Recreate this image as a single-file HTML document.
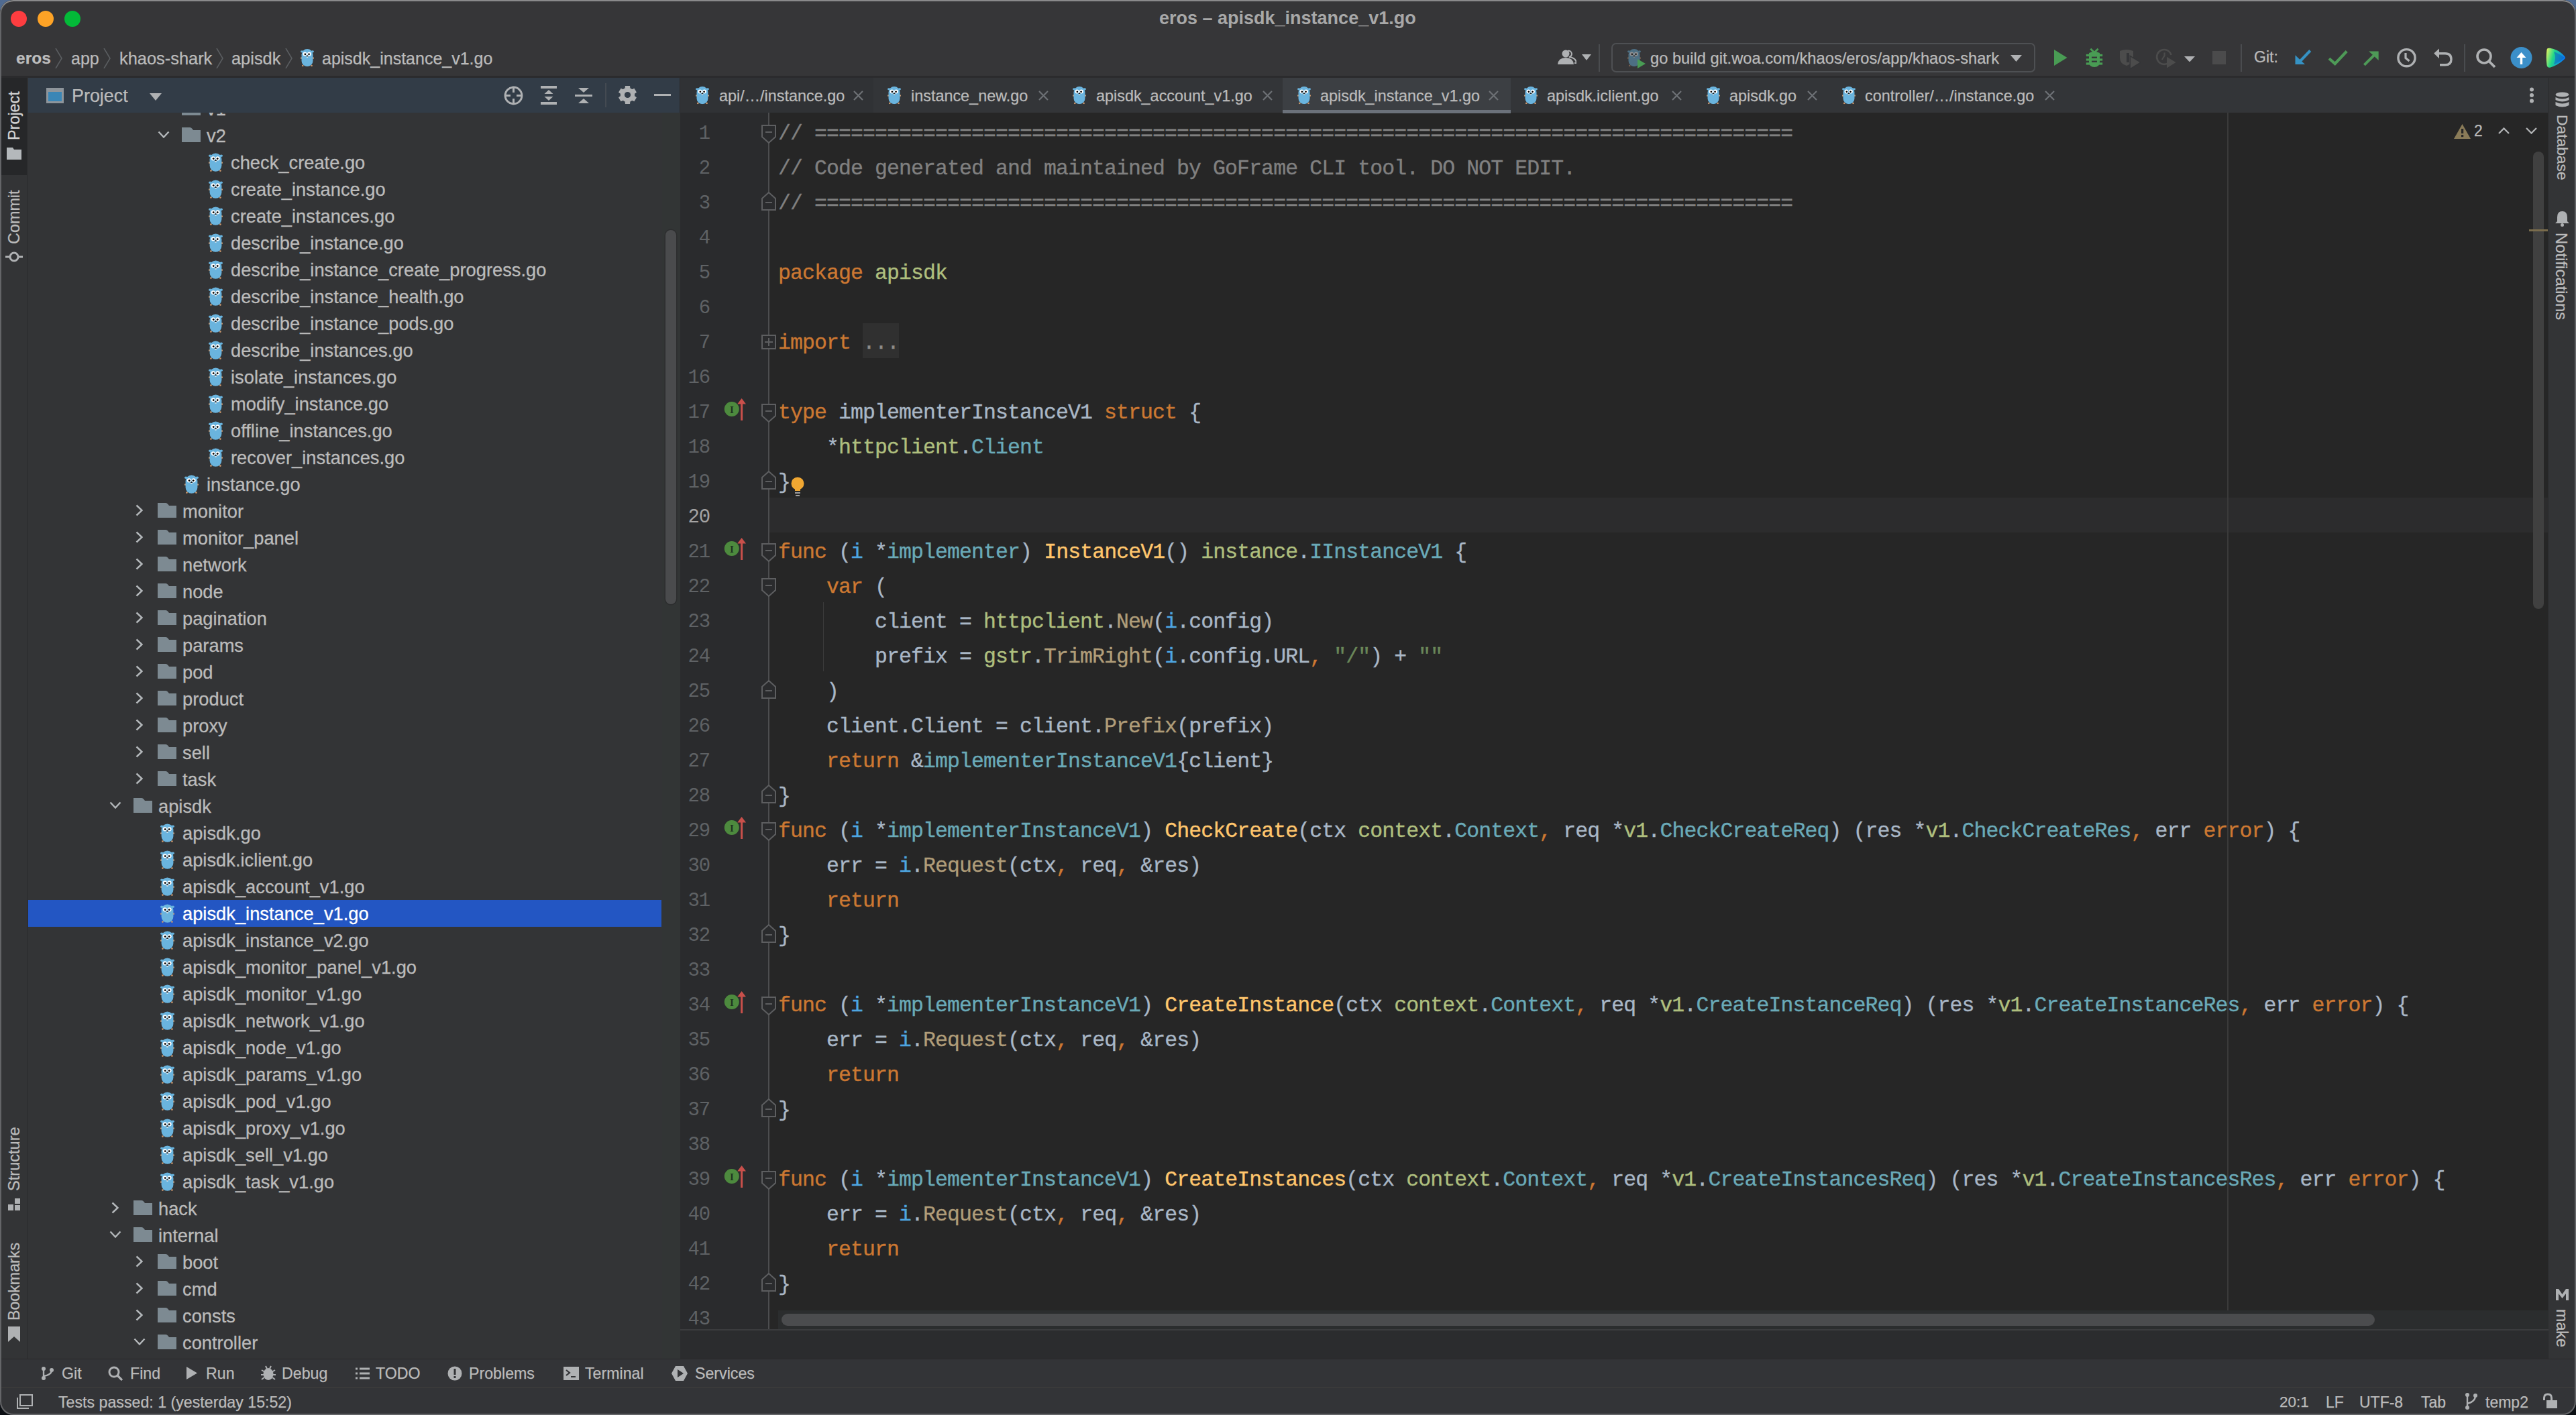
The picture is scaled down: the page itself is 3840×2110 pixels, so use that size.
<!DOCTYPE html><html><head><meta charset="utf-8"><style>
*{box-sizing:border-box}html,body{margin:0;padding:0;width:3840px;height:2110px;overflow:hidden;background:linear-gradient(180deg,#506b92 0%,#2a3444 50%,#0b0f14 100%)}
.abs{position:absolute}
#win{position:absolute;left:0;top:0;width:3840px;height:2110px;border-radius:20px;overflow:hidden;background:#363638;box-shadow:inset 0 0 0 2px #5a5b5e}
.sans{font-family:'Liberation Sans', sans-serif}
.mono{font-family:'Liberation Mono', monospace}
.tr{position:absolute;height:40px;line-height:40px;font-family:'Liberation Sans', sans-serif;font-size:27.3px;color:#bbbbbb;white-space:pre;-webkit-text-stroke:0.3px currentColor}
.cl{position:absolute;left:1160px;height:52px;line-height:52px;font-family:'Liberation Mono', monospace;font-size:31.5px;letter-spacing:-0.9px;-webkit-text-stroke:0.35px currentColor;color:#a9b7c6;white-space:pre}
.ln{position:absolute;left:1000px;width:58px;text-align:right;height:52px;line-height:52px;font-family:'Liberation Mono', monospace;font-size:29px;letter-spacing:-1.2px;color:#5f6265;white-space:pre}
.kw{color:#cc7832}.cm{color:#808080}.pk{color:#afbf7e}.ty{color:#6aaab8}.fn{color:#ffc66d}.call{color:#b09d79}.rc{color:#4ea6e0}.st{color:#6a8759}
.tab{position:absolute;top:115px;height:53px;line-height:53px;font-family:'Liberation Sans', sans-serif;font-size:26px;color:#bbbbbb;white-space:pre}
.vt{position:absolute;font-family:'Liberation Sans', sans-serif;font-size:24px;color:#bbbbbb;white-space:pre;transform-origin:0 0;transform:rotate(-90deg)}
.bt{position:absolute;top:2026px;height:43px;line-height:43px;font-family:'Liberation Sans', sans-serif;font-size:25px;color:#bbbbbb;white-space:pre}
.st2{position:absolute;top:2069px;height:41px;line-height:41px;font-family:'Liberation Sans', sans-serif;font-size:24px;color:#bbbbbb;white-space:pre}

</style></head><body><div id="win">
<svg width="0" height="0" style="position:absolute"><defs>
<symbol id="gopher" viewBox="0 0 21 28">
 <ellipse cx="2.2" cy="4.3" rx="2.2" ry="1.7" fill="#6ab4de"/><ellipse cx="18.8" cy="4.3" rx="2.2" ry="1.7" fill="#6ab4de"/>
 <circle cx="1.2" cy="14.6" r="1.3" fill="#c9966c"/><circle cx="19.8" cy="14.6" r="1.3" fill="#c9966c"/>
 <circle cx="3.4" cy="26.6" r="1.4" fill="#c9966c"/><circle cx="17.4" cy="26.6" r="1.4" fill="#c9966c"/>
 <rect x="1.6" y="0.4" width="17.8" height="27.4" rx="8.9" fill="#6ab4de"/>
 <circle cx="6.8" cy="8.3" r="3.1" fill="#fff"/><circle cx="13.6" cy="8.3" r="3.1" fill="#fff"/>
 <circle cx="7.2" cy="8.6" r="1.4" fill="#000"/><circle cx="13.2" cy="8.6" r="1.4" fill="#000"/>
 <rect x="9.4" y="11.6" width="2.2" height="2" fill="#fff"/><ellipse cx="10.5" cy="11.3" rx="1.4" ry="1" fill="#222"/>
</symbol>
<symbol id="folder" viewBox="0 0 28 22">
 <path d="M0 0 H12 Q14 0 15.5 2 L17 4 H28 V22 H0 Z" fill="#7d8a92"/>
</symbol>
<symbol id="chevr" viewBox="0 0 11 18"><path d="M1.5 1.5 L9.5 9 L1.5 16.5" fill="none" stroke="#b4b8bb" stroke-width="2.4"/></symbol>
<symbol id="chevd" viewBox="0 0 18 11"><path d="M1.5 1.5 L9 9.5 L16.5 1.5" fill="none" stroke="#b4b8bb" stroke-width="2.4"/></symbol>
</defs></svg>
<div class="abs" style="left:0px;top:0px;width:3840px;height:115px;background:#363638;"></div>
<div class="abs" style="left:16px;top:16px;width:24px;height:24px;border-radius:50%;background:#fd3d40"></div>
<div class="abs" style="left:56px;top:16px;width:24px;height:24px;border-radius:50%;background:#fea326"></div>
<div class="abs" style="left:96px;top:16px;width:24px;height:24px;border-radius:50%;background:#03ba38"></div>
<div class="abs sans" style="left:1728px;top:9px;font-size:27px;font-weight:bold;color:#a8a8a8;line-height:36px;white-space:pre">eros – apisdk_instance_v1.go</div>
<div class="abs" style="left:0px;top:113px;width:3840px;height:3px;background:#2b2b2d;"></div>
<div class="abs" style="left:0px;top:115px;width:41px;height:1911px;background:#333436;"></div>
<div class="abs" style="left:41px;top:115px;width:1px;height:1911px;background:#29292b;"></div>
<div class="abs" style="left:2px;top:116px;width:38px;height:145px;background:#262729;"></div>
<div class="abs" style="left:42px;top:116px;width:972px;height:52px;background:#323c47;"></div>
<div class="abs" style="left:1013px;top:116px;width:2px;height:52px;background:#2b2b2d;"></div>
<div class="abs" style="left:42px;top:168px;width:972px;height:1858px;background:#333436;"></div>
<div class="abs" style="left:1014px;top:115px;width:2785px;height:53px;background:#333538;"></div>
<div class="abs" style="left:1014px;top:168px;width:2785px;height:1815px;background:#262626;"></div>
<div class="abs" style="left:1014px;top:168px;width:132px;height:1815px;background:#2a2b2d;"></div>
<div class="abs" style="left:42px;top:168px;width:972px;height:1858px;overflow:hidden">
<svg class="abs" style="left:229px;top:-18px" width="28" height="22"><use href="#folder"/></svg>
<svg class="abs" style="left:193px;top:-13px" width="18" height="11"><use href="#chevd"/></svg>
<div class="tr" style="left:266px;top:-25px;">v1</div>
<svg class="abs" style="left:229px;top:22px" width="28" height="22"><use href="#folder"/></svg>
<svg class="abs" style="left:193px;top:27px" width="18" height="11"><use href="#chevd"/></svg>
<div class="tr" style="left:266px;top:15px;">v2</div>
<svg class="abs" style="left:269px;top:60px" width="21" height="28"><use href="#gopher"/></svg>
<div class="tr" style="left:302px;top:55px;">check_create.go</div>
<svg class="abs" style="left:269px;top:100px" width="21" height="28"><use href="#gopher"/></svg>
<div class="tr" style="left:302px;top:95px;">create_instance.go</div>
<svg class="abs" style="left:269px;top:140px" width="21" height="28"><use href="#gopher"/></svg>
<div class="tr" style="left:302px;top:135px;">create_instances.go</div>
<svg class="abs" style="left:269px;top:180px" width="21" height="28"><use href="#gopher"/></svg>
<div class="tr" style="left:302px;top:175px;">describe_instance.go</div>
<svg class="abs" style="left:269px;top:220px" width="21" height="28"><use href="#gopher"/></svg>
<div class="tr" style="left:302px;top:215px;">describe_instance_create_progress.go</div>
<svg class="abs" style="left:269px;top:260px" width="21" height="28"><use href="#gopher"/></svg>
<div class="tr" style="left:302px;top:255px;">describe_instance_health.go</div>
<svg class="abs" style="left:269px;top:300px" width="21" height="28"><use href="#gopher"/></svg>
<div class="tr" style="left:302px;top:295px;">describe_instance_pods.go</div>
<svg class="abs" style="left:269px;top:340px" width="21" height="28"><use href="#gopher"/></svg>
<div class="tr" style="left:302px;top:335px;">describe_instances.go</div>
<svg class="abs" style="left:269px;top:380px" width="21" height="28"><use href="#gopher"/></svg>
<div class="tr" style="left:302px;top:375px;">isolate_instances.go</div>
<svg class="abs" style="left:269px;top:420px" width="21" height="28"><use href="#gopher"/></svg>
<div class="tr" style="left:302px;top:415px;">modify_instance.go</div>
<svg class="abs" style="left:269px;top:460px" width="21" height="28"><use href="#gopher"/></svg>
<div class="tr" style="left:302px;top:455px;">offline_instances.go</div>
<svg class="abs" style="left:269px;top:500px" width="21" height="28"><use href="#gopher"/></svg>
<div class="tr" style="left:302px;top:495px;">recover_instances.go</div>
<svg class="abs" style="left:233px;top:540px" width="21" height="28"><use href="#gopher"/></svg>
<div class="tr" style="left:266px;top:535px;">instance.go</div>
<svg class="abs" style="left:193px;top:582px" width="28" height="22"><use href="#folder"/></svg>
<svg class="abs" style="left:160px;top:584px" width="11" height="18"><use href="#chevr"/></svg>
<div class="tr" style="left:230px;top:575px;">monitor</div>
<svg class="abs" style="left:193px;top:622px" width="28" height="22"><use href="#folder"/></svg>
<svg class="abs" style="left:160px;top:624px" width="11" height="18"><use href="#chevr"/></svg>
<div class="tr" style="left:230px;top:615px;">monitor_panel</div>
<svg class="abs" style="left:193px;top:662px" width="28" height="22"><use href="#folder"/></svg>
<svg class="abs" style="left:160px;top:664px" width="11" height="18"><use href="#chevr"/></svg>
<div class="tr" style="left:230px;top:655px;">network</div>
<svg class="abs" style="left:193px;top:702px" width="28" height="22"><use href="#folder"/></svg>
<svg class="abs" style="left:160px;top:704px" width="11" height="18"><use href="#chevr"/></svg>
<div class="tr" style="left:230px;top:695px;">node</div>
<svg class="abs" style="left:193px;top:742px" width="28" height="22"><use href="#folder"/></svg>
<svg class="abs" style="left:160px;top:744px" width="11" height="18"><use href="#chevr"/></svg>
<div class="tr" style="left:230px;top:735px;">pagination</div>
<svg class="abs" style="left:193px;top:782px" width="28" height="22"><use href="#folder"/></svg>
<svg class="abs" style="left:160px;top:784px" width="11" height="18"><use href="#chevr"/></svg>
<div class="tr" style="left:230px;top:775px;">params</div>
<svg class="abs" style="left:193px;top:822px" width="28" height="22"><use href="#folder"/></svg>
<svg class="abs" style="left:160px;top:824px" width="11" height="18"><use href="#chevr"/></svg>
<div class="tr" style="left:230px;top:815px;">pod</div>
<svg class="abs" style="left:193px;top:862px" width="28" height="22"><use href="#folder"/></svg>
<svg class="abs" style="left:160px;top:864px" width="11" height="18"><use href="#chevr"/></svg>
<div class="tr" style="left:230px;top:855px;">product</div>
<svg class="abs" style="left:193px;top:902px" width="28" height="22"><use href="#folder"/></svg>
<svg class="abs" style="left:160px;top:904px" width="11" height="18"><use href="#chevr"/></svg>
<div class="tr" style="left:230px;top:895px;">proxy</div>
<svg class="abs" style="left:193px;top:942px" width="28" height="22"><use href="#folder"/></svg>
<svg class="abs" style="left:160px;top:944px" width="11" height="18"><use href="#chevr"/></svg>
<div class="tr" style="left:230px;top:935px;">sell</div>
<svg class="abs" style="left:193px;top:982px" width="28" height="22"><use href="#folder"/></svg>
<svg class="abs" style="left:160px;top:984px" width="11" height="18"><use href="#chevr"/></svg>
<div class="tr" style="left:230px;top:975px;">task</div>
<svg class="abs" style="left:157px;top:1022px" width="28" height="22"><use href="#folder"/></svg>
<svg class="abs" style="left:121px;top:1027px" width="18" height="11"><use href="#chevd"/></svg>
<div class="tr" style="left:194px;top:1015px;">apisdk</div>
<svg class="abs" style="left:197px;top:1060px" width="21" height="28"><use href="#gopher"/></svg>
<div class="tr" style="left:230px;top:1055px;">apisdk.go</div>
<svg class="abs" style="left:197px;top:1100px" width="21" height="28"><use href="#gopher"/></svg>
<div class="tr" style="left:230px;top:1095px;">apisdk.iclient.go</div>
<svg class="abs" style="left:197px;top:1140px" width="21" height="28"><use href="#gopher"/></svg>
<div class="tr" style="left:230px;top:1135px;">apisdk_account_v1.go</div>
<div class="abs" style="left:0px;top:1174px;width:944px;height:40px;background:#2356c3;"></div>
<svg class="abs" style="left:197px;top:1180px" width="21" height="28"><use href="#gopher"/></svg>
<div class="tr" style="left:230px;top:1175px;color:#ffffff;">apisdk_instance_v1.go</div>
<svg class="abs" style="left:197px;top:1220px" width="21" height="28"><use href="#gopher"/></svg>
<div class="tr" style="left:230px;top:1215px;">apisdk_instance_v2.go</div>
<svg class="abs" style="left:197px;top:1260px" width="21" height="28"><use href="#gopher"/></svg>
<div class="tr" style="left:230px;top:1255px;">apisdk_monitor_panel_v1.go</div>
<svg class="abs" style="left:197px;top:1300px" width="21" height="28"><use href="#gopher"/></svg>
<div class="tr" style="left:230px;top:1295px;">apisdk_monitor_v1.go</div>
<svg class="abs" style="left:197px;top:1340px" width="21" height="28"><use href="#gopher"/></svg>
<div class="tr" style="left:230px;top:1335px;">apisdk_network_v1.go</div>
<svg class="abs" style="left:197px;top:1380px" width="21" height="28"><use href="#gopher"/></svg>
<div class="tr" style="left:230px;top:1375px;">apisdk_node_v1.go</div>
<svg class="abs" style="left:197px;top:1420px" width="21" height="28"><use href="#gopher"/></svg>
<div class="tr" style="left:230px;top:1415px;">apisdk_params_v1.go</div>
<svg class="abs" style="left:197px;top:1460px" width="21" height="28"><use href="#gopher"/></svg>
<div class="tr" style="left:230px;top:1455px;">apisdk_pod_v1.go</div>
<svg class="abs" style="left:197px;top:1500px" width="21" height="28"><use href="#gopher"/></svg>
<div class="tr" style="left:230px;top:1495px;">apisdk_proxy_v1.go</div>
<svg class="abs" style="left:197px;top:1540px" width="21" height="28"><use href="#gopher"/></svg>
<div class="tr" style="left:230px;top:1535px;">apisdk_sell_v1.go</div>
<svg class="abs" style="left:197px;top:1580px" width="21" height="28"><use href="#gopher"/></svg>
<div class="tr" style="left:230px;top:1575px;">apisdk_task_v1.go</div>
<svg class="abs" style="left:157px;top:1622px" width="28" height="22"><use href="#folder"/></svg>
<svg class="abs" style="left:124px;top:1624px" width="11" height="18"><use href="#chevr"/></svg>
<div class="tr" style="left:194px;top:1615px;">hack</div>
<svg class="abs" style="left:157px;top:1662px" width="28" height="22"><use href="#folder"/></svg>
<svg class="abs" style="left:121px;top:1667px" width="18" height="11"><use href="#chevd"/></svg>
<div class="tr" style="left:194px;top:1655px;">internal</div>
<svg class="abs" style="left:193px;top:1702px" width="28" height="22"><use href="#folder"/></svg>
<svg class="abs" style="left:160px;top:1704px" width="11" height="18"><use href="#chevr"/></svg>
<div class="tr" style="left:230px;top:1695px;">boot</div>
<svg class="abs" style="left:193px;top:1742px" width="28" height="22"><use href="#folder"/></svg>
<svg class="abs" style="left:160px;top:1744px" width="11" height="18"><use href="#chevr"/></svg>
<div class="tr" style="left:230px;top:1735px;">cmd</div>
<svg class="abs" style="left:193px;top:1782px" width="28" height="22"><use href="#folder"/></svg>
<svg class="abs" style="left:160px;top:1784px" width="11" height="18"><use href="#chevr"/></svg>
<div class="tr" style="left:230px;top:1775px;">consts</div>
<svg class="abs" style="left:193px;top:1822px" width="28" height="22"><use href="#folder"/></svg>
<svg class="abs" style="left:157px;top:1827px" width="18" height="11"><use href="#chevd"/></svg>
<div class="tr" style="left:230px;top:1815px;">controller</div>
</div>
<div class="abs" style="left:987px;top:168px;width:27px;height:1858px;background:#323535;"></div>
<div class="abs" style="left:992px;top:343px;width:16px;height:558px;background:#4a4b4d;border-radius:8px;box-shadow:0 0 0 1.5px #2c2d2e;"></div>
<div class="abs" style="left:0;top:168px;width:3799px;height:1815px;overflow:hidden">
<div class="ln" style="top:6px;">1</div>
<div class="cl" style="top:6px"><span class="cm">// =================================================================================</span></div>
<div class="ln" style="top:58px;">2</div>
<div class="cl" style="top:58px"><span class="cm">// Code generated and maintained by GoFrame CLI tool. DO NOT EDIT.</span></div>
<div class="ln" style="top:110px;">3</div>
<div class="cl" style="top:110px"><span class="cm">// =================================================================================</span></div>
<div class="ln" style="top:162px;">4</div>
<div class="cl" style="top:162px"></div>
<div class="ln" style="top:214px;">5</div>
<div class="cl" style="top:214px"><span class="kw">package</span> <span class="pk">apisdk</span></div>
<div class="ln" style="top:266px;">6</div>
<div class="cl" style="top:266px"></div>
<div class="abs" style="left:1286px;top:314px;width:54px;height:52px;background:#303030;"></div>
<div class="ln" style="top:318px;">7</div>
<div class="cl" style="top:318px"><span class="kw">import</span> <span style="color:#8c8c8c">...</span></div>
<div class="ln" style="top:370px;">16</div>
<div class="cl" style="top:370px"></div>
<div class="ln" style="top:422px;">17</div>
<div class="cl" style="top:422px"><span class="kw">type</span> implementerInstanceV1 <span class="kw">struct</span> {</div>
<div class="ln" style="top:474px;">18</div>
<div class="cl" style="top:474px">    *<span class="pk">httpclient</span>.<span class="ty">Client</span></div>
<div class="ln" style="top:526px;">19</div>
<div class="cl" style="top:526px">}</div>
<div class="abs" style="left:1146px;top:574px;width:2653px;height:52px;background:#2c2c2d;"></div>
<div class="ln" style="top:578px;color:#a4a3a3;">20</div>
<div class="cl" style="top:578px"></div>
<div class="ln" style="top:630px;">21</div>
<div class="cl" style="top:630px"><span class="kw">func</span> (<span class="rc">i</span> *<span class="ty">implementer</span>) <span class="fn">InstanceV1</span>() <span class="pk">instance</span>.<span class="ty">IInstanceV1</span> {</div>
<div class="ln" style="top:682px;">22</div>
<div class="cl" style="top:682px">    <span class="kw">var</span> (</div>
<div class="ln" style="top:734px;">23</div>
<div class="cl" style="top:734px">        client = <span class="pk">httpclient</span>.<span class="call">New</span>(<span class="rc">i</span>.config)</div>
<div class="ln" style="top:786px;">24</div>
<div class="cl" style="top:786px">        prefix = <span class="pk">gstr</span>.<span class="call">TrimRight</span>(<span class="rc">i</span>.config.URL<span class="kw">,</span> <span class="st">&quot;/&quot;</span>) + <span class="st">&quot;&quot;</span></div>
<div class="ln" style="top:838px;">25</div>
<div class="cl" style="top:838px">    )</div>
<div class="ln" style="top:890px;">26</div>
<div class="cl" style="top:890px">    client.Client = client.<span class="call">Prefix</span>(prefix)</div>
<div class="ln" style="top:942px;">27</div>
<div class="cl" style="top:942px">    <span class="kw">return</span> &amp;<span class="ty">implementerInstanceV1</span>{client}</div>
<div class="ln" style="top:994px;">28</div>
<div class="cl" style="top:994px">}</div>
<div class="ln" style="top:1046px;">29</div>
<div class="cl" style="top:1046px"><span class="kw">func</span> (<span class="rc">i</span> *<span class="ty">implementerInstanceV1</span>) <span class="fn">CheckCreate</span>(ctx <span class="pk">context</span>.<span class="ty">Context</span><span class="kw">,</span> req *<span class="pk">v1</span>.<span class="ty">CheckCreateReq</span>) (res *<span class="pk">v1</span>.<span class="ty">CheckCreateRes</span><span class="kw">,</span> err <span class="kw">error</span>) {</div>
<div class="ln" style="top:1098px;">30</div>
<div class="cl" style="top:1098px">    err = <span class="rc">i</span>.<span class="call">Request</span>(ctx<span class="kw">,</span> req<span class="kw">,</span> &amp;res)</div>
<div class="ln" style="top:1150px;">31</div>
<div class="cl" style="top:1150px">    <span class="kw">return</span></div>
<div class="ln" style="top:1202px;">32</div>
<div class="cl" style="top:1202px">}</div>
<div class="ln" style="top:1254px;">33</div>
<div class="cl" style="top:1254px"></div>
<div class="ln" style="top:1306px;">34</div>
<div class="cl" style="top:1306px"><span class="kw">func</span> (<span class="rc">i</span> *<span class="ty">implementerInstanceV1</span>) <span class="fn">CreateInstance</span>(ctx <span class="pk">context</span>.<span class="ty">Context</span><span class="kw">,</span> req *<span class="pk">v1</span>.<span class="ty">CreateInstanceReq</span>) (res *<span class="pk">v1</span>.<span class="ty">CreateInstanceRes</span><span class="kw">,</span> err <span class="kw">error</span>) {</div>
<div class="ln" style="top:1358px;">35</div>
<div class="cl" style="top:1358px">    err = <span class="rc">i</span>.<span class="call">Request</span>(ctx<span class="kw">,</span> req<span class="kw">,</span> &amp;res)</div>
<div class="ln" style="top:1410px;">36</div>
<div class="cl" style="top:1410px">    <span class="kw">return</span></div>
<div class="ln" style="top:1462px;">37</div>
<div class="cl" style="top:1462px">}</div>
<div class="ln" style="top:1514px;">38</div>
<div class="cl" style="top:1514px"></div>
<div class="ln" style="top:1566px;">39</div>
<div class="cl" style="top:1566px"><span class="kw">func</span> (<span class="rc">i</span> *<span class="ty">implementerInstanceV1</span>) <span class="fn">CreateInstances</span>(ctx <span class="pk">context</span>.<span class="ty">Context</span><span class="kw">,</span> req *<span class="pk">v1</span>.<span class="ty">CreateInstancesReq</span>) (res *<span class="pk">v1</span>.<span class="ty">CreateInstancesRes</span><span class="kw">,</span> err <span class="kw">error</span>) {</div>
<div class="ln" style="top:1618px;">40</div>
<div class="cl" style="top:1618px">    err = <span class="rc">i</span>.<span class="call">Request</span>(ctx<span class="kw">,</span> req<span class="kw">,</span> &amp;res)</div>
<div class="ln" style="top:1670px;">41</div>
<div class="cl" style="top:1670px">    <span class="kw">return</span></div>
<div class="ln" style="top:1722px;">42</div>
<div class="cl" style="top:1722px">}</div>
<div class="ln" style="top:1774px;">43</div>
<div class="cl" style="top:1774px"></div>
</div>
<div class="abs" style="left:1014px;top:1983px;width:2785px;height:43px;background:#2b2c2e;"></div>
<div class="abs" style="left:3799px;top:115px;width:41px;height:1911px;background:#333436;"></div>
<div class="abs" style="left:3798px;top:115px;width:1px;height:1911px;background:#29292b;"></div>
<div class="abs" style="left:0px;top:2026px;width:3840px;height:43px;background:#333437;"></div>
<div class="abs" style="left:0px;top:2068px;width:3840px;height:1px;background:#403f3d;"></div>
<div class="abs" style="left:0px;top:2026px;width:3840px;height:1px;background:#29292b;"></div>
<div class="abs" style="left:0px;top:2069px;width:3840px;height:41px;background:#333437;"></div>
<div class="abs" style="left:24px;top:72px;font-family:'Liberation Sans', sans-serif;font-size:24.5px;line-height:29px;color:#bdbdbd;font-weight:bold;white-space:pre;-webkit-text-stroke:0.25px currentColor;">eros</div>
<div class="abs" style="left:106px;top:72px;font-family:'Liberation Sans', sans-serif;font-size:25px;line-height:30px;color:#bbbbbb;font-weight:normal;white-space:pre;-webkit-text-stroke:0.25px currentColor;">app</div>
<div class="abs" style="left:178px;top:72px;font-family:'Liberation Sans', sans-serif;font-size:25.4px;line-height:30px;color:#bbbbbb;font-weight:normal;white-space:pre;-webkit-text-stroke:0.25px currentColor;">khaos-shark</div>
<div class="abs" style="left:345px;top:72px;font-family:'Liberation Sans', sans-serif;font-size:25.4px;line-height:30px;color:#bbbbbb;font-weight:normal;white-space:pre;-webkit-text-stroke:0.25px currentColor;">apisdk</div>
<div class="abs" style="left:480px;top:72px;font-family:'Liberation Sans', sans-serif;font-size:25px;line-height:30px;color:#bbbbbb;font-weight:normal;white-space:pre;-webkit-text-stroke:0.25px currentColor;">apisdk_instance_v1.go</div>
<svg class="abs" style="left:82px;top:72px" width="11" height="30" viewBox="0 0 11 30"><path d="M1 0 L10 15 L1 30" fill="none" stroke="#5b5e61" stroke-width="1.6"/></svg>
<svg class="abs" style="left:154px;top:72px" width="11" height="30" viewBox="0 0 11 30"><path d="M1 0 L10 15 L1 30" fill="none" stroke="#5b5e61" stroke-width="1.6"/></svg>
<svg class="abs" style="left:322px;top:72px" width="11" height="30" viewBox="0 0 11 30"><path d="M1 0 L10 15 L1 30" fill="none" stroke="#5b5e61" stroke-width="1.6"/></svg>
<svg class="abs" style="left:425px;top:72px" width="11" height="30" viewBox="0 0 11 30"><path d="M1 0 L10 15 L1 30" fill="none" stroke="#5b5e61" stroke-width="1.6"/></svg>
<svg class="abs" style="left:448px;top:72px" width="20" height="28" viewBox="0 0 21 28"><use href="#gopher"/></svg>
<svg class="abs" style="left:2322px;top:74px" width="28" height="22" viewBox="0 0 28 22"><circle cx="12" cy="6" r="5.5" fill="#afb1b3"/><path d="M0 22 Q1 12 12 12 Q23 12 24 22Z" fill="#afb1b3"/><path d="M15 2 Q20 1 21 6 Q21 10 17 11 Q27 12 28 20 H25" fill="none" stroke="#afb1b3" stroke-width="2"/></svg>
<svg class="abs" style="left:2358px;top:81px" width="14" height="9" viewBox="0 0 14 9"><path d="M0 0 H14 L7 9Z" fill="#afb1b3"/></svg>
<div class="abs" style="left:2383px;top:66px;width:2px;height:41px;background:#4a4c4f;"></div>
<div class="abs" style="left:2402px;top:64px;width:632px;height:44px;border:2px solid #4e5053;border-radius:7px"></div>
<svg class="abs" style="left:2426px;top:72px;opacity:0.45" width="20" height="28" viewBox="0 0 21 28"><use href="#gopher"/></svg>
<svg class="abs" style="left:2441px;top:88px" width="12" height="14" viewBox="0 0 12 14"><path d="M0 0 L12 7 L0 14Z" fill="#499c54"/></svg>
<div class="abs" style="left:2460px;top:72.5px;font-family:'Liberation Sans', sans-serif;font-size:23.7px;line-height:28px;color:#bbbbbb;font-weight:normal;white-space:pre;-webkit-text-stroke:0.25px currentColor;">go build git.woa.com/khaos/eros/app/khaos-shark</div>
<svg class="abs" style="left:2997px;top:82px" width="17" height="10" viewBox="0 0 17 10"><path d="M0 0 H17 L8.5 10Z" fill="#afb1b3"/></svg>
<svg class="abs" style="left:3062px;top:74px" width="20" height="24" viewBox="0 0 20 24"><path d="M0 0 L19.5 12 L0 24Z" fill="#499c54"/></svg>
<svg class="abs" style="left:3108px;top:70px" width="28" height="32" viewBox="0 0 28 32"><path d="M8.3 2.7 L13.7 8.1 M19.7 2.7 L14.3 8.1" stroke="#499c54" stroke-width="2.8"/><path d="M6 9 Q14 5 22 9 V22 Q22 30 14 30 Q6 30 6 22Z" fill="#499c54"/><rect x="1.8" y="10.8" width="24.4" height="3.3" fill="#499c54"/><rect x="1.8" y="17.4" width="24.4" height="3.2" fill="#499c54"/><rect x="1.8" y="23.3" width="24.4" height="3.3" fill="#499c54"/><rect x="10" y="14.6" width="8" height="2.2" fill="#343538"/><rect x="10" y="20.6" width="8" height="2.2" fill="#343538"/></svg>
<svg class="abs" style="left:3158px;top:72px" width="34" height="32" viewBox="0 0 34 32"><path d="M2 4 Q12 0 22 4 V14 Q22 23 12 26 Q2 23 2 14Z" fill="#4c4c4c"/><rect x="12" y="7" width="4" height="14" fill="#343538"/><path d="M18 12.7 L31.7 21 L18 29.5Z" fill="#343538" stroke="#343538" stroke-width="3"/><path d="M18 12.7 L31.7 21 L18 29.5Z" fill="#4c4c4c"/></svg>
<svg class="abs" style="left:3212px;top:70px" width="34" height="34" viewBox="0 0 34 34"><path d="M20 24 A10.9 10.9 0 1 1 24.5 12" fill="none" stroke="#4c4c4c" stroke-width="2.6"/><path d="M14.6 8.5 V13 L10.8 19" fill="none" stroke="#4c4c4c" stroke-width="2.2"/><path d="M18 14.7 L31.5 23 L18 31.5Z" fill="#4c4c4c"/></svg>
<svg class="abs" style="left:3256px;top:83.5px" width="16" height="8.5" viewBox="0 0 16 8.5"><path d="M0 0 H16 L8 8.5Z" fill="#afb1b3"/></svg>
<div class="abs" style="left:3298px;top:76px;width:20px;height:20px;background:#4b4b4c;"></div>
<div class="abs" style="left:3340px;top:66px;width:2px;height:41px;background:#4a4c4f;"></div>
<div class="abs" style="left:3360px;top:71px;font-family:'Liberation Sans', sans-serif;font-size:23.1px;line-height:28px;color:#bbbbbb;font-weight:normal;white-space:pre;-webkit-text-stroke:0.25px currentColor;">Git:</div>
<svg class="abs" style="left:3418px;top:72px" width="30" height="28" viewBox="0 0 30 28"><path d="M25.8 3.5 L11 19" stroke="#3592c4" stroke-width="4"/><path d="M3.5 10.3 V23.9 H18Z" fill="#3592c4"/></svg>
<svg class="abs" style="left:3470px;top:72px" width="32" height="28" viewBox="0 0 32 28"><path d="M2 15.2 L10.7 23 L28.2 4.5" fill="none" stroke="#4e9a57" stroke-width="4.2"/></svg>
<svg class="abs" style="left:3520px;top:72px" width="30" height="28" viewBox="0 0 30 28"><path d="M4.4 24.9 L20 9.4" stroke="#4e9a57" stroke-width="4"/><path d="M11.2 4.5 H25.7 V18.1Z" fill="#4e9a57"/></svg>
<svg class="abs" style="left:3572px;top:71px" width="31" height="31" viewBox="0 0 31 31"><circle cx="15.5" cy="15.2" r="12.6" fill="none" stroke="#afb1b3" stroke-width="3.4"/><path d="M14 8 V15.5 L19.5 20" fill="none" stroke="#afb1b3" stroke-width="3.2"/></svg>
<svg class="abs" style="left:3626px;top:70px" width="30" height="32" viewBox="0 0 30 32"><path d="M2.2 9.4 L10 2.6 V17.2Z" fill="#afb1b3"/><path d="M9 9.8 H19 Q28 9.8 28 18.5 Q28 26.8 19 26.8 H11" fill="none" stroke="#afb1b3" stroke-width="3.4"/></svg>
<div class="abs" style="left:3673px;top:66px;width:2px;height:41px;background:#4a4c4f;"></div>
<svg class="abs" style="left:3690px;top:71px" width="32" height="32" viewBox="0 0 32 32"><circle cx="13" cy="13" r="10" fill="none" stroke="#afb1b3" stroke-width="3.6"/><path d="M20 20 L29 29" stroke="#afb1b3" stroke-width="3.8"/></svg>
<svg class="abs" style="left:3742px;top:70px" width="33" height="32" viewBox="0 0 33 32"><circle cx="16.5" cy="16" r="16" fill="#3b8fc9"/><path d="M16.5 26 V13" stroke="#fff" stroke-width="3.4"/><path d="M9.5 16 L16.5 8 L23.5 16Z" fill="#fff"/></svg>
<svg class="abs" style="left:3795px;top:71px" width="30" height="30" viewBox="0 0 30 30"><defs><linearGradient id="tbg" x1="0" y1="0" x2="1" y2="0.3"><stop offset="0" stop-color="#f3f45c"/><stop offset="0.45" stop-color="#21d789"/><stop offset="1" stop-color="#087cfa"/></linearGradient></defs><path d="M1.5 3 Q2 0 6 0.8 Q20 3 28 13 Q30 15 28 17 Q19 26 7 29.5 Q2 30.5 1.5 26 Q0 15 1.5 3Z" fill="url(#tbg)"/><path d="M12 6 Q20 9 28 15 Q20 22 12 25 Q16 15 12 6Z" fill="#0a5fc0" opacity="0.55"/></svg>
<svg class="abs" style="left:68px;top:130px" width="28" height="25" viewBox="0 0 28 25"><rect x="1" y="1" width="26" height="23" fill="#8e959b"/><rect x="4" y="7" width="20" height="14" fill="#3a86b6"/></svg>
<div class="abs" style="left:107px;top:127px;font-family:'Liberation Sans', sans-serif;font-size:26.9px;line-height:32px;color:#bbbbbb;font-weight:normal;white-space:pre;-webkit-text-stroke:0.25px currentColor;">Project</div>
<svg class="abs" style="left:223px;top:139px" width="18" height="11" viewBox="0 0 18 11"><path d="M0 0 H18 L9 11Z" fill="#afb1b3"/></svg>
<svg class="abs" style="left:751px;top:128px" width="29" height="29" viewBox="0 0 29 29"><circle cx="14.5" cy="14.5" r="12.4" fill="none" stroke="#afb1b3" stroke-width="3"/><path d="M14.5 2 V10 M14.5 19 V27 M2 14.5 H10 M19 14.5 H27" stroke="#afb1b3" stroke-width="3"/></svg>
<svg class="abs" style="left:806px;top:128px" width="25" height="29" viewBox="0 0 25 29"><path d="M0 2 H24 M0 26 H24" stroke="#afb1b3" stroke-width="4"/><path d="M5.5 12 L12 6 L18.5 12Z M5.5 16 L12 22 L18.5 16Z" fill="#afb1b3"/></svg>
<svg class="abs" style="left:857px;top:128px" width="26" height="29" viewBox="0 0 26 29"><path d="M0 14.5 H26" stroke="#afb1b3" stroke-width="3"/><path d="M5 3 L13 10 L21 3Z M5 26 L13 19 L21 26Z" fill="#afb1b3"/></svg>
<div class="abs" style="left:902px;top:124px;width:2px;height:36px;background:#444a52;"></div>
<svg class="abs" style="left:922px;top:128px" width="27" height="27" viewBox="0 0 27 27"><path d="M10.18 3.86 L10.51 0.54 L16.49 0.54 L16.82 3.86 L20.19 5.80 L23.23 4.43 L26.22 9.61 L23.51 11.55 L23.51 15.45 L26.22 17.39 L23.23 22.57 L20.19 21.20 L16.82 23.14 L16.49 26.46 L10.51 26.46 L10.18 23.14 L6.81 21.20 L3.77 22.57 L0.78 17.39 L3.49 15.45 L3.49 11.55 L0.78 9.61 L3.77 4.43 L6.81 5.80Z" fill="#afb1b3" stroke="#afb1b3" stroke-width="1.2" stroke-linejoin="round"/><circle cx="13.5" cy="13.5" r="4.6" fill="#323c47"/></svg>
<div class="abs" style="left:975px;top:140px;width:25px;height:3px;background:#afb1b3;"></div>
<div class="abs" style="left:6.5px;top:209px;font-family:'Liberation Sans', sans-serif;font-size:23.4px;line-height:28px;color:#d4d4d4;font-weight:normal;white-space:pre;-webkit-text-stroke:0.25px currentColor;transform-origin:0 0;transform:rotate(-90deg)">Project</div>
<svg class="abs" style="left:10px;top:220px" width="22" height="18" viewBox="0 0 22 18"><path d="M0 0 H9 L11 3 H22 V18 H0Z" fill="#b4b8bb"/></svg>
<div class="abs" style="left:6.5px;top:364px;font-family:'Liberation Sans', sans-serif;font-size:23.4px;line-height:28px;color:#bbbbbb;font-weight:normal;white-space:pre;-webkit-text-stroke:0.25px currentColor;transform-origin:0 0;transform:rotate(-90deg)">Commit</div>
<svg class="abs" style="left:8px;top:374px" width="26" height="18" viewBox="0 0 26 18"><circle cx="13" cy="9" r="6" fill="none" stroke="#afb1b3" stroke-width="3"/><path d="M0 9 H6 M20 9 H26" stroke="#afb1b3" stroke-width="3"/></svg>
<div class="abs" style="left:6.5px;top:1776px;font-family:'Liberation Sans', sans-serif;font-size:23.6px;line-height:28px;color:#bbbbbb;font-weight:normal;white-space:pre;-webkit-text-stroke:0.25px currentColor;transform-origin:0 0;transform:rotate(-90deg)">Structure</div>
<svg class="abs" style="left:12px;top:1787px" width="18" height="18" viewBox="0 0 18 18"><rect x="0" y="9" width="8" height="9" fill="#afb1b3"/><rect x="10" y="0" width="8" height="8" fill="#afb1b3"/><rect x="10" y="10" width="8" height="8" fill="#afb1b3"/></svg>
<div class="abs" style="left:6.5px;top:1969px;font-family:'Liberation Sans', sans-serif;font-size:23.2px;line-height:28px;color:#bbbbbb;font-weight:normal;white-space:pre;-webkit-text-stroke:0.25px currentColor;transform-origin:0 0;transform:rotate(-90deg)">Bookmarks</div>
<svg class="abs" style="left:12px;top:1978px" width="18" height="23" viewBox="0 0 18 23"><path d="M0 0 H18 V23 L9 15 L0 23Z" fill="#afb1b3"/></svg>
<div class="abs" style="left:1014px;top:115px;width:288px;height:53px;background:#303235;"></div>
<div class="abs" style="left:1912px;top:115px;width:340px;height:53px;background:#3c3f43;"></div>
<div class="abs" style="left:1912px;top:164px;width:340px;height:5px;background:#6b717a;"></div>
<svg class="abs" style="left:1037px;top:128px" width="20" height="28" viewBox="0 0 21 28"><use href="#gopher"/></svg>
<div class="abs" style="left:1072px;top:128.5px;font-family:'Liberation Sans', sans-serif;font-size:23.4px;line-height:28px;color:#bbbbbb;font-weight:normal;white-space:pre;-webkit-text-stroke:0.25px currentColor;">api/…/instance.go</div>
<svg class="abs" style="left:1272px;top:135px" width="15" height="15" viewBox="0 0 15 15"><path d="M1 1 L14 14 M14 1 L1 14" stroke="#6e7276" stroke-width="2.2"/></svg>
<svg class="abs" style="left:1323px;top:128px" width="20" height="28" viewBox="0 0 21 28"><use href="#gopher"/></svg>
<div class="abs" style="left:1358px;top:128.5px;font-family:'Liberation Sans', sans-serif;font-size:23.4px;line-height:28px;color:#bbbbbb;font-weight:normal;white-space:pre;-webkit-text-stroke:0.25px currentColor;">instance_new.go</div>
<svg class="abs" style="left:1548px;top:135px" width="15" height="15" viewBox="0 0 15 15"><path d="M1 1 L14 14 M14 1 L1 14" stroke="#6e7276" stroke-width="2.2"/></svg>
<svg class="abs" style="left:1599px;top:128px" width="20" height="28" viewBox="0 0 21 28"><use href="#gopher"/></svg>
<div class="abs" style="left:1634px;top:128.5px;font-family:'Liberation Sans', sans-serif;font-size:23.4px;line-height:28px;color:#bbbbbb;font-weight:normal;white-space:pre;-webkit-text-stroke:0.25px currentColor;">apisdk_account_v1.go</div>
<svg class="abs" style="left:1882px;top:135px" width="15" height="15" viewBox="0 0 15 15"><path d="M1 1 L14 14 M14 1 L1 14" stroke="#6e7276" stroke-width="2.2"/></svg>
<svg class="abs" style="left:1934px;top:128px" width="20" height="28" viewBox="0 0 21 28"><use href="#gopher"/></svg>
<div class="abs" style="left:1968px;top:128.5px;font-family:'Liberation Sans', sans-serif;font-size:23.4px;line-height:28px;color:#bbbbbb;font-weight:normal;white-space:pre;-webkit-text-stroke:0.25px currentColor;">apisdk_instance_v1.go</div>
<svg class="abs" style="left:2219px;top:135px" width="15" height="15" viewBox="0 0 15 15"><path d="M1 1 L14 14 M14 1 L1 14" stroke="#6e7276" stroke-width="2.2"/></svg>
<svg class="abs" style="left:2272px;top:128px" width="20" height="28" viewBox="0 0 21 28"><use href="#gopher"/></svg>
<div class="abs" style="left:2306px;top:128.5px;font-family:'Liberation Sans', sans-serif;font-size:23.4px;line-height:28px;color:#bbbbbb;font-weight:normal;white-space:pre;-webkit-text-stroke:0.25px currentColor;">apisdk.iclient.go</div>
<svg class="abs" style="left:2492px;top:135px" width="15" height="15" viewBox="0 0 15 15"><path d="M1 1 L14 14 M14 1 L1 14" stroke="#6e7276" stroke-width="2.2"/></svg>
<svg class="abs" style="left:2544px;top:128px" width="20" height="28" viewBox="0 0 21 28"><use href="#gopher"/></svg>
<div class="abs" style="left:2578px;top:128.5px;font-family:'Liberation Sans', sans-serif;font-size:23.4px;line-height:28px;color:#bbbbbb;font-weight:normal;white-space:pre;-webkit-text-stroke:0.25px currentColor;">apisdk.go</div>
<svg class="abs" style="left:2694px;top:135px" width="15" height="15" viewBox="0 0 15 15"><path d="M1 1 L14 14 M14 1 L1 14" stroke="#6e7276" stroke-width="2.2"/></svg>
<svg class="abs" style="left:2746px;top:128px" width="20" height="28" viewBox="0 0 21 28"><use href="#gopher"/></svg>
<div class="abs" style="left:2780px;top:128.5px;font-family:'Liberation Sans', sans-serif;font-size:23.4px;line-height:28px;color:#bbbbbb;font-weight:normal;white-space:pre;-webkit-text-stroke:0.25px currentColor;">controller/…/instance.go</div>
<svg class="abs" style="left:3048px;top:135px" width="15" height="15" viewBox="0 0 15 15"><path d="M1 1 L14 14 M14 1 L1 14" stroke="#6e7276" stroke-width="2.2"/></svg>
<svg class="abs" style="left:3769px;top:130px" width="10" height="24" viewBox="0 0 10 24"><circle cx="5" cy="3.5" r="3" fill="#afb1b3"/><circle cx="5" cy="12" r="3" fill="#afb1b3"/><circle cx="5" cy="20.5" r="3" fill="#afb1b3"/></svg>
<div class="abs" style="left:0px;top:113px;width:3840px;height:3px;background:#2b2b2d;"></div>
<div class="abs" style="left:3320px;top:168px;width:2px;height:1786px;background:#3a3a3a;"></div>
<div class="abs" style="left:1145px;top:168px;width:2px;height:1814px;background:#4c4d4f;"></div>
<svg class="abs" style="left:1135px;top:186px" width="22" height="28" viewBox="0 0 22 28"><path d="M1 1 H21 V18 L11 27 L1 18Z" fill="#2a2b2d" stroke="#5d5e60" stroke-width="2"/><path d="M6 11 H16" stroke="#5d5e60" stroke-width="2"/></svg>
<svg class="abs" style="left:1135px;top:602px" width="22" height="28" viewBox="0 0 22 28"><path d="M1 1 H21 V18 L11 27 L1 18Z" fill="#2a2b2d" stroke="#5d5e60" stroke-width="2"/><path d="M6 11 H16" stroke="#5d5e60" stroke-width="2"/></svg>
<svg class="abs" style="left:1135px;top:810px" width="22" height="28" viewBox="0 0 22 28"><path d="M1 1 H21 V18 L11 27 L1 18Z" fill="#2a2b2d" stroke="#5d5e60" stroke-width="2"/><path d="M6 11 H16" stroke="#5d5e60" stroke-width="2"/></svg>
<svg class="abs" style="left:1135px;top:862px" width="22" height="28" viewBox="0 0 22 28"><path d="M1 1 H21 V18 L11 27 L1 18Z" fill="#2a2b2d" stroke="#5d5e60" stroke-width="2"/><path d="M6 11 H16" stroke="#5d5e60" stroke-width="2"/></svg>
<svg class="abs" style="left:1135px;top:1226px" width="22" height="28" viewBox="0 0 22 28"><path d="M1 1 H21 V18 L11 27 L1 18Z" fill="#2a2b2d" stroke="#5d5e60" stroke-width="2"/><path d="M6 11 H16" stroke="#5d5e60" stroke-width="2"/></svg>
<svg class="abs" style="left:1135px;top:1486px" width="22" height="28" viewBox="0 0 22 28"><path d="M1 1 H21 V18 L11 27 L1 18Z" fill="#2a2b2d" stroke="#5d5e60" stroke-width="2"/><path d="M6 11 H16" stroke="#5d5e60" stroke-width="2"/></svg>
<svg class="abs" style="left:1135px;top:1746px" width="22" height="28" viewBox="0 0 22 28"><path d="M1 1 H21 V18 L11 27 L1 18Z" fill="#2a2b2d" stroke="#5d5e60" stroke-width="2"/><path d="M6 11 H16" stroke="#5d5e60" stroke-width="2"/></svg>
<svg class="abs" style="left:1135px;top:286px" width="22" height="28" viewBox="0 0 22 28"><path d="M1 27 H21 V10 L11 1 L1 10Z" fill="#2a2b2d" stroke="#5d5e60" stroke-width="2"/><path d="M6 16 H16" stroke="#5d5e60" stroke-width="2"/></svg>
<svg class="abs" style="left:1135px;top:702px" width="22" height="28" viewBox="0 0 22 28"><path d="M1 27 H21 V10 L11 1 L1 10Z" fill="#2a2b2d" stroke="#5d5e60" stroke-width="2"/><path d="M6 16 H16" stroke="#5d5e60" stroke-width="2"/></svg>
<svg class="abs" style="left:1135px;top:1014px" width="22" height="28" viewBox="0 0 22 28"><path d="M1 27 H21 V10 L11 1 L1 10Z" fill="#2a2b2d" stroke="#5d5e60" stroke-width="2"/><path d="M6 16 H16" stroke="#5d5e60" stroke-width="2"/></svg>
<svg class="abs" style="left:1135px;top:1170px" width="22" height="28" viewBox="0 0 22 28"><path d="M1 27 H21 V10 L11 1 L1 10Z" fill="#2a2b2d" stroke="#5d5e60" stroke-width="2"/><path d="M6 16 H16" stroke="#5d5e60" stroke-width="2"/></svg>
<svg class="abs" style="left:1135px;top:1378px" width="22" height="28" viewBox="0 0 22 28"><path d="M1 27 H21 V10 L11 1 L1 10Z" fill="#2a2b2d" stroke="#5d5e60" stroke-width="2"/><path d="M6 16 H16" stroke="#5d5e60" stroke-width="2"/></svg>
<svg class="abs" style="left:1135px;top:1638px" width="22" height="28" viewBox="0 0 22 28"><path d="M1 27 H21 V10 L11 1 L1 10Z" fill="#2a2b2d" stroke="#5d5e60" stroke-width="2"/><path d="M6 16 H16" stroke="#5d5e60" stroke-width="2"/></svg>
<svg class="abs" style="left:1135px;top:1898px" width="22" height="28" viewBox="0 0 22 28"><path d="M1 27 H21 V10 L11 1 L1 10Z" fill="#2a2b2d" stroke="#5d5e60" stroke-width="2"/><path d="M6 16 H16" stroke="#5d5e60" stroke-width="2"/></svg>
<svg class="abs" style="left:1135px;top:499px" width="22" height="22" viewBox="0 0 22 22"><rect x="1" y="1" width="20" height="20" fill="#2a2b2d" stroke="#5d5e60" stroke-width="2"/><path d="M5 11 H17 M11 5 V17" stroke="#5d5e60" stroke-width="2"/></svg>
<svg class="abs" style="left:1079px;top:593px" width="36" height="36" viewBox="0 0 36 36"><circle cx="11.8" cy="17" r="11" fill="#4d8a3e"/><text x="11.8" y="22.5" font-family="Liberation Serif" font-weight="bold" font-size="15" text-anchor="middle" fill="#1e3320">I</text><path d="M26.6 34 V8" stroke="#c9504b" stroke-width="3"/><path d="M20.2 9.5 L26.6 1 L33 9.5Z" fill="#c9504b"/></svg>
<svg class="abs" style="left:1079px;top:801px" width="36" height="36" viewBox="0 0 36 36"><circle cx="11.8" cy="17" r="11" fill="#4d8a3e"/><text x="11.8" y="22.5" font-family="Liberation Serif" font-weight="bold" font-size="15" text-anchor="middle" fill="#1e3320">I</text><path d="M26.6 34 V8" stroke="#c9504b" stroke-width="3"/><path d="M20.2 9.5 L26.6 1 L33 9.5Z" fill="#c9504b"/></svg>
<svg class="abs" style="left:1079px;top:1217px" width="36" height="36" viewBox="0 0 36 36"><circle cx="11.8" cy="17" r="11" fill="#4d8a3e"/><text x="11.8" y="22.5" font-family="Liberation Serif" font-weight="bold" font-size="15" text-anchor="middle" fill="#1e3320">I</text><path d="M26.6 34 V8" stroke="#c9504b" stroke-width="3"/><path d="M20.2 9.5 L26.6 1 L33 9.5Z" fill="#c9504b"/></svg>
<svg class="abs" style="left:1079px;top:1477px" width="36" height="36" viewBox="0 0 36 36"><circle cx="11.8" cy="17" r="11" fill="#4d8a3e"/><text x="11.8" y="22.5" font-family="Liberation Serif" font-weight="bold" font-size="15" text-anchor="middle" fill="#1e3320">I</text><path d="M26.6 34 V8" stroke="#c9504b" stroke-width="3"/><path d="M20.2 9.5 L26.6 1 L33 9.5Z" fill="#c9504b"/></svg>
<svg class="abs" style="left:1079px;top:1737px" width="36" height="36" viewBox="0 0 36 36"><circle cx="11.8" cy="17" r="11" fill="#4d8a3e"/><text x="11.8" y="22.5" font-family="Liberation Serif" font-weight="bold" font-size="15" text-anchor="middle" fill="#1e3320">I</text><path d="M26.6 34 V8" stroke="#c9504b" stroke-width="3"/><path d="M20.2 9.5 L26.6 1 L33 9.5Z" fill="#c9504b"/></svg>
<div class="abs" style="left:1227px;top:898px;width:1px;height:103px;background:#3b3b3b;"></div>
<svg class="abs" style="left:1178px;top:711px" width="22" height="30" viewBox="0 0 22 30"><circle cx="11" cy="10" r="9.5" fill="#f0a732"/><rect x="7" y="17" width="8" height="4" fill="#f0a732"/><path d="M7 24 H15 M8 28 H14" stroke="#a0a0a0" stroke-width="2"/></svg>
<svg class="abs" style="left:3658px;top:185px" width="25" height="22" viewBox="0 0 25 22"><path d="M12.5 0 L25 22 H0Z" fill="#8a7b58"/><rect x="11" y="7" width="3.2" height="7" fill="#262626"/><rect x="11" y="16" width="3.2" height="3.2" fill="#262626"/></svg>
<div class="abs" style="left:3688px;top:181px;font-family:'Liberation Sans', sans-serif;font-size:23px;line-height:28px;color:#bbbbbb;font-weight:normal;white-space:pre;-webkit-text-stroke:0.25px currentColor;">2</div>
<svg class="abs" style="left:3724px;top:190px" width="17" height="10" viewBox="0 0 17 10"><path d="M1 9 L8.5 1.5 L16 9" fill="none" stroke="#afb1b3" stroke-width="2.4"/></svg>
<svg class="abs" style="left:3765px;top:190px" width="17" height="10" viewBox="0 0 17 10"><path d="M1 1 L8.5 8.5 L16 1" fill="none" stroke="#afb1b3" stroke-width="2.4"/></svg>
<div class="abs" style="left:3776px;top:226px;width:16px;height:682px;background:#404040;border-radius:8px;"></div>
<div class="abs" style="left:3770px;top:342px;width:28px;height:3px;background:#7a6c4c;"></div>
<div class="abs" style="left:1160px;top:1954px;width:2639px;height:29px;background:#2b2d2e;"></div>
<div class="abs" style="left:1165px;top:1959px;width:2375px;height:18px;background:#4b4c4e;border-radius:9px;"></div>
<div class="abs" style="left:1014px;top:1982px;width:2785px;height:2px;background:#3b3c3e;"></div>
<svg class="abs" style="left:3809px;top:137px" width="21" height="25" viewBox="0 0 21 25"><ellipse cx="10.5" cy="4" rx="10" ry="3.5" fill="#afb1b3"/><path d="M0.5 8 Q10.5 13 20.5 8 V12 Q10.5 17 0.5 12Z M0.5 15 Q10.5 20 20.5 15 V20 Q10.5 25 0.5 20Z" fill="#afb1b3"/></svg>
<div class="abs" style="left:3833px;top:171px;font-family:'Liberation Sans', sans-serif;font-size:22.8px;line-height:27px;color:#bbbbbb;white-space:pre;-webkit-text-stroke:0.25px currentColor;transform-origin:0 0;transform:rotate(90deg)">Database</div>
<svg class="abs" style="left:3809px;top:315px" width="21" height="23" viewBox="0 0 21 23"><path d="M10.5 0 Q18 0 18 9 V15 L21 18 H0 L3 15 V9 Q3 0 10.5 0Z" fill="#afb1b3"/><circle cx="10.5" cy="20.5" r="2.5" fill="#afb1b3"/></svg>
<div class="abs" style="left:3833px;top:347px;font-family:'Liberation Sans', sans-serif;font-size:23.9px;line-height:29px;color:#bbbbbb;white-space:pre;-webkit-text-stroke:0.25px currentColor;transform-origin:0 0;transform:rotate(90deg)">Notifications</div>
<svg class="abs" style="left:3810px;top:1922px" width="19" height="17" viewBox="0 0 19 17"><path d="M0 17 V0 H4 L9.5 8 L15 0 H19 V17 H15 V7 L9.5 14 L4 7 V17Z" fill="#afb1b3"/></svg>
<div class="abs" style="left:3833px;top:1952px;font-family:'Liberation Sans', sans-serif;font-size:23.3px;line-height:28px;color:#bbbbbb;white-space:pre;-webkit-text-stroke:0.25px currentColor;transform-origin:0 0;transform:rotate(90deg)">make</div>
<div class="abs" style="left:92px;top:2034px;font-family:'Liberation Sans', sans-serif;font-size:23.2px;line-height:28px;color:#bbbbbb;font-weight:normal;white-space:pre;-webkit-text-stroke:0.25px currentColor;">Git</div>
<div class="abs" style="left:194px;top:2034px;font-family:'Liberation Sans', sans-serif;font-size:23.2px;line-height:28px;color:#bbbbbb;font-weight:normal;white-space:pre;-webkit-text-stroke:0.25px currentColor;">Find</div>
<div class="abs" style="left:307px;top:2034px;font-family:'Liberation Sans', sans-serif;font-size:23.2px;line-height:28px;color:#bbbbbb;font-weight:normal;white-space:pre;-webkit-text-stroke:0.25px currentColor;">Run</div>
<div class="abs" style="left:420px;top:2034px;font-family:'Liberation Sans', sans-serif;font-size:23.2px;line-height:28px;color:#bbbbbb;font-weight:normal;white-space:pre;-webkit-text-stroke:0.25px currentColor;">Debug</div>
<div class="abs" style="left:560px;top:2034px;font-family:'Liberation Sans', sans-serif;font-size:23.2px;line-height:28px;color:#bbbbbb;font-weight:normal;white-space:pre;-webkit-text-stroke:0.25px currentColor;">TODO</div>
<div class="abs" style="left:699px;top:2034px;font-family:'Liberation Sans', sans-serif;font-size:23.2px;line-height:28px;color:#bbbbbb;font-weight:normal;white-space:pre;-webkit-text-stroke:0.25px currentColor;">Problems</div>
<div class="abs" style="left:872px;top:2034px;font-family:'Liberation Sans', sans-serif;font-size:23.2px;line-height:28px;color:#bbbbbb;font-weight:normal;white-space:pre;-webkit-text-stroke:0.25px currentColor;">Terminal</div>
<div class="abs" style="left:1036px;top:2034px;font-family:'Liberation Sans', sans-serif;font-size:23.2px;line-height:28px;color:#bbbbbb;font-weight:normal;white-space:pre;-webkit-text-stroke:0.25px currentColor;">Services</div>
<svg class="abs" style="left:61px;top:2037px" width="20" height="22" viewBox="0 0 20 22"><circle cx="4" cy="4" r="3" fill="#afb1b3"/><circle cx="4" cy="18" r="3" fill="#afb1b3"/><circle cx="16" cy="6" r="3" fill="#afb1b3"/><path d="M4 4 V18 M16 6 Q16 13 4 15" fill="none" stroke="#afb1b3" stroke-width="2.4"/></svg>
<svg class="abs" style="left:161px;top:2037px" width="22" height="22" viewBox="0 0 22 22"><circle cx="9" cy="9" r="7" fill="none" stroke="#afb1b3" stroke-width="3"/><path d="M14 14 L21 21" stroke="#afb1b3" stroke-width="3.2"/></svg>
<svg class="abs" style="left:278px;top:2038px" width="16" height="19" viewBox="0 0 16 19"><path d="M0 0 L16 9.5 L0 19Z" fill="#afb1b3"/></svg>
<svg class="abs" style="left:389px;top:2036px" width="22" height="23" viewBox="0 0 22 23"><ellipse cx="11" cy="13" rx="7.5" ry="9" fill="#afb1b3"/><path d="M1 7 L6 10 M21 7 L16 10 M0 14 H4 M18 14 H22 M1 21 L5 18 M21 21 L17 18 M7 1 L9 5 M15 1 L13 5" stroke="#afb1b3" stroke-width="2"/></svg>
<svg class="abs" style="left:530px;top:2039px" width="21" height="18" viewBox="0 0 21 18"><path d="M0 2 H3 M6 2 H21 M0 9 H3 M6 9 H21 M0 16 H3 M6 16 H21" stroke="#afb1b3" stroke-width="3"/></svg>
<svg class="abs" style="left:667px;top:2037px" width="22" height="22" viewBox="0 0 22 22"><circle cx="11" cy="11" r="10.5" fill="#afb1b3"/><rect x="9.5" y="4" width="3" height="9" fill="#333437"/><rect x="9.5" y="15" width="3" height="3" fill="#333437"/></svg>
<svg class="abs" style="left:840px;top:2038px" width="23" height="20" viewBox="0 0 23 20"><rect x="0" y="0" width="23" height="20" fill="#afb1b3"/><path d="M4 5 L9 9 L4 13 M11 15 H18" stroke="#333437" stroke-width="2.2" fill="none"/></svg>
<svg class="abs" style="left:1001px;top:2036px" width="24" height="24" viewBox="0 0 24 24"><path d="M6 1 H18 L24 12 L18 23 H6 L0 12Z" fill="#afb1b3"/><path d="M9 6 L18 12 L9 18Z" fill="#333437"/></svg>
<svg class="abs" style="left:24px;top:2079px" width="25" height="23" viewBox="0 0 25 23"><rect x="6" y="1" width="18" height="16" fill="none" stroke="#afb1b3" stroke-width="2"/><path d="M2 5 V21 H19" fill="none" stroke="#afb1b3" stroke-width="2"/></svg>
<div class="abs" style="left:87px;top:2077px;font-family:'Liberation Sans', sans-serif;font-size:23.2px;line-height:28px;color:#bbbbbb;font-weight:normal;white-space:pre;-webkit-text-stroke:0.25px currentColor;">Tests passed: 1 (yesterday 15:52)</div>
<div class="abs" style="left:3398px;top:2077px;font-family:'Liberation Sans', sans-serif;font-size:22.5px;line-height:27px;color:#bbbbbb;font-weight:normal;white-space:pre;-webkit-text-stroke:0.25px currentColor;">20:1</div>
<div class="abs" style="left:3467px;top:2077px;font-family:'Liberation Sans', sans-serif;font-size:23px;line-height:28px;color:#bbbbbb;font-weight:normal;white-space:pre;-webkit-text-stroke:0.25px currentColor;">LF</div>
<div class="abs" style="left:3517px;top:2077px;font-family:'Liberation Sans', sans-serif;font-size:23px;line-height:28px;color:#bbbbbb;font-weight:normal;white-space:pre;-webkit-text-stroke:0.25px currentColor;">UTF-8</div>
<div class="abs" style="left:3609px;top:2077px;font-family:'Liberation Sans', sans-serif;font-size:23px;line-height:28px;color:#bbbbbb;font-weight:normal;white-space:pre;-webkit-text-stroke:0.25px currentColor;">Tab</div>
<svg class="abs" style="left:3674px;top:2076px" width="20" height="27" viewBox="0 0 20 27"><circle cx="4" cy="4" r="3" fill="#afb1b3"/><circle cx="4" cy="23" r="3" fill="#afb1b3"/><circle cx="16" cy="5" r="3" fill="#afb1b3"/><path d="M4 4 V23 M16 5 Q16 14 4 17" fill="none" stroke="#afb1b3" stroke-width="2.4"/></svg>
<div class="abs" style="left:3705px;top:2077px;font-family:'Liberation Sans', sans-serif;font-size:23px;line-height:28px;color:#bbbbbb;font-weight:normal;white-space:pre;-webkit-text-stroke:0.25px currentColor;">temp2</div>
<svg class="abs" style="left:3789px;top:2077px" width="24" height="24" viewBox="0 0 24 24"><path d="M3.5 11 V7.5 Q3.5 2 9 2 Q14.5 2 14.5 7.5 V11" fill="none" stroke="#afb1b3" stroke-width="3"/><rect x="7" y="11" width="16" height="12" fill="#afb1b3"/></svg>
<div class="abs" style="left:0;top:0;width:3840px;height:2110px;border-radius:20px;box-shadow:inset 0 2px 0 #8a8a8b, inset 0 0 0 2px #646568;pointer-events:none"></div>
</div></body></html>
